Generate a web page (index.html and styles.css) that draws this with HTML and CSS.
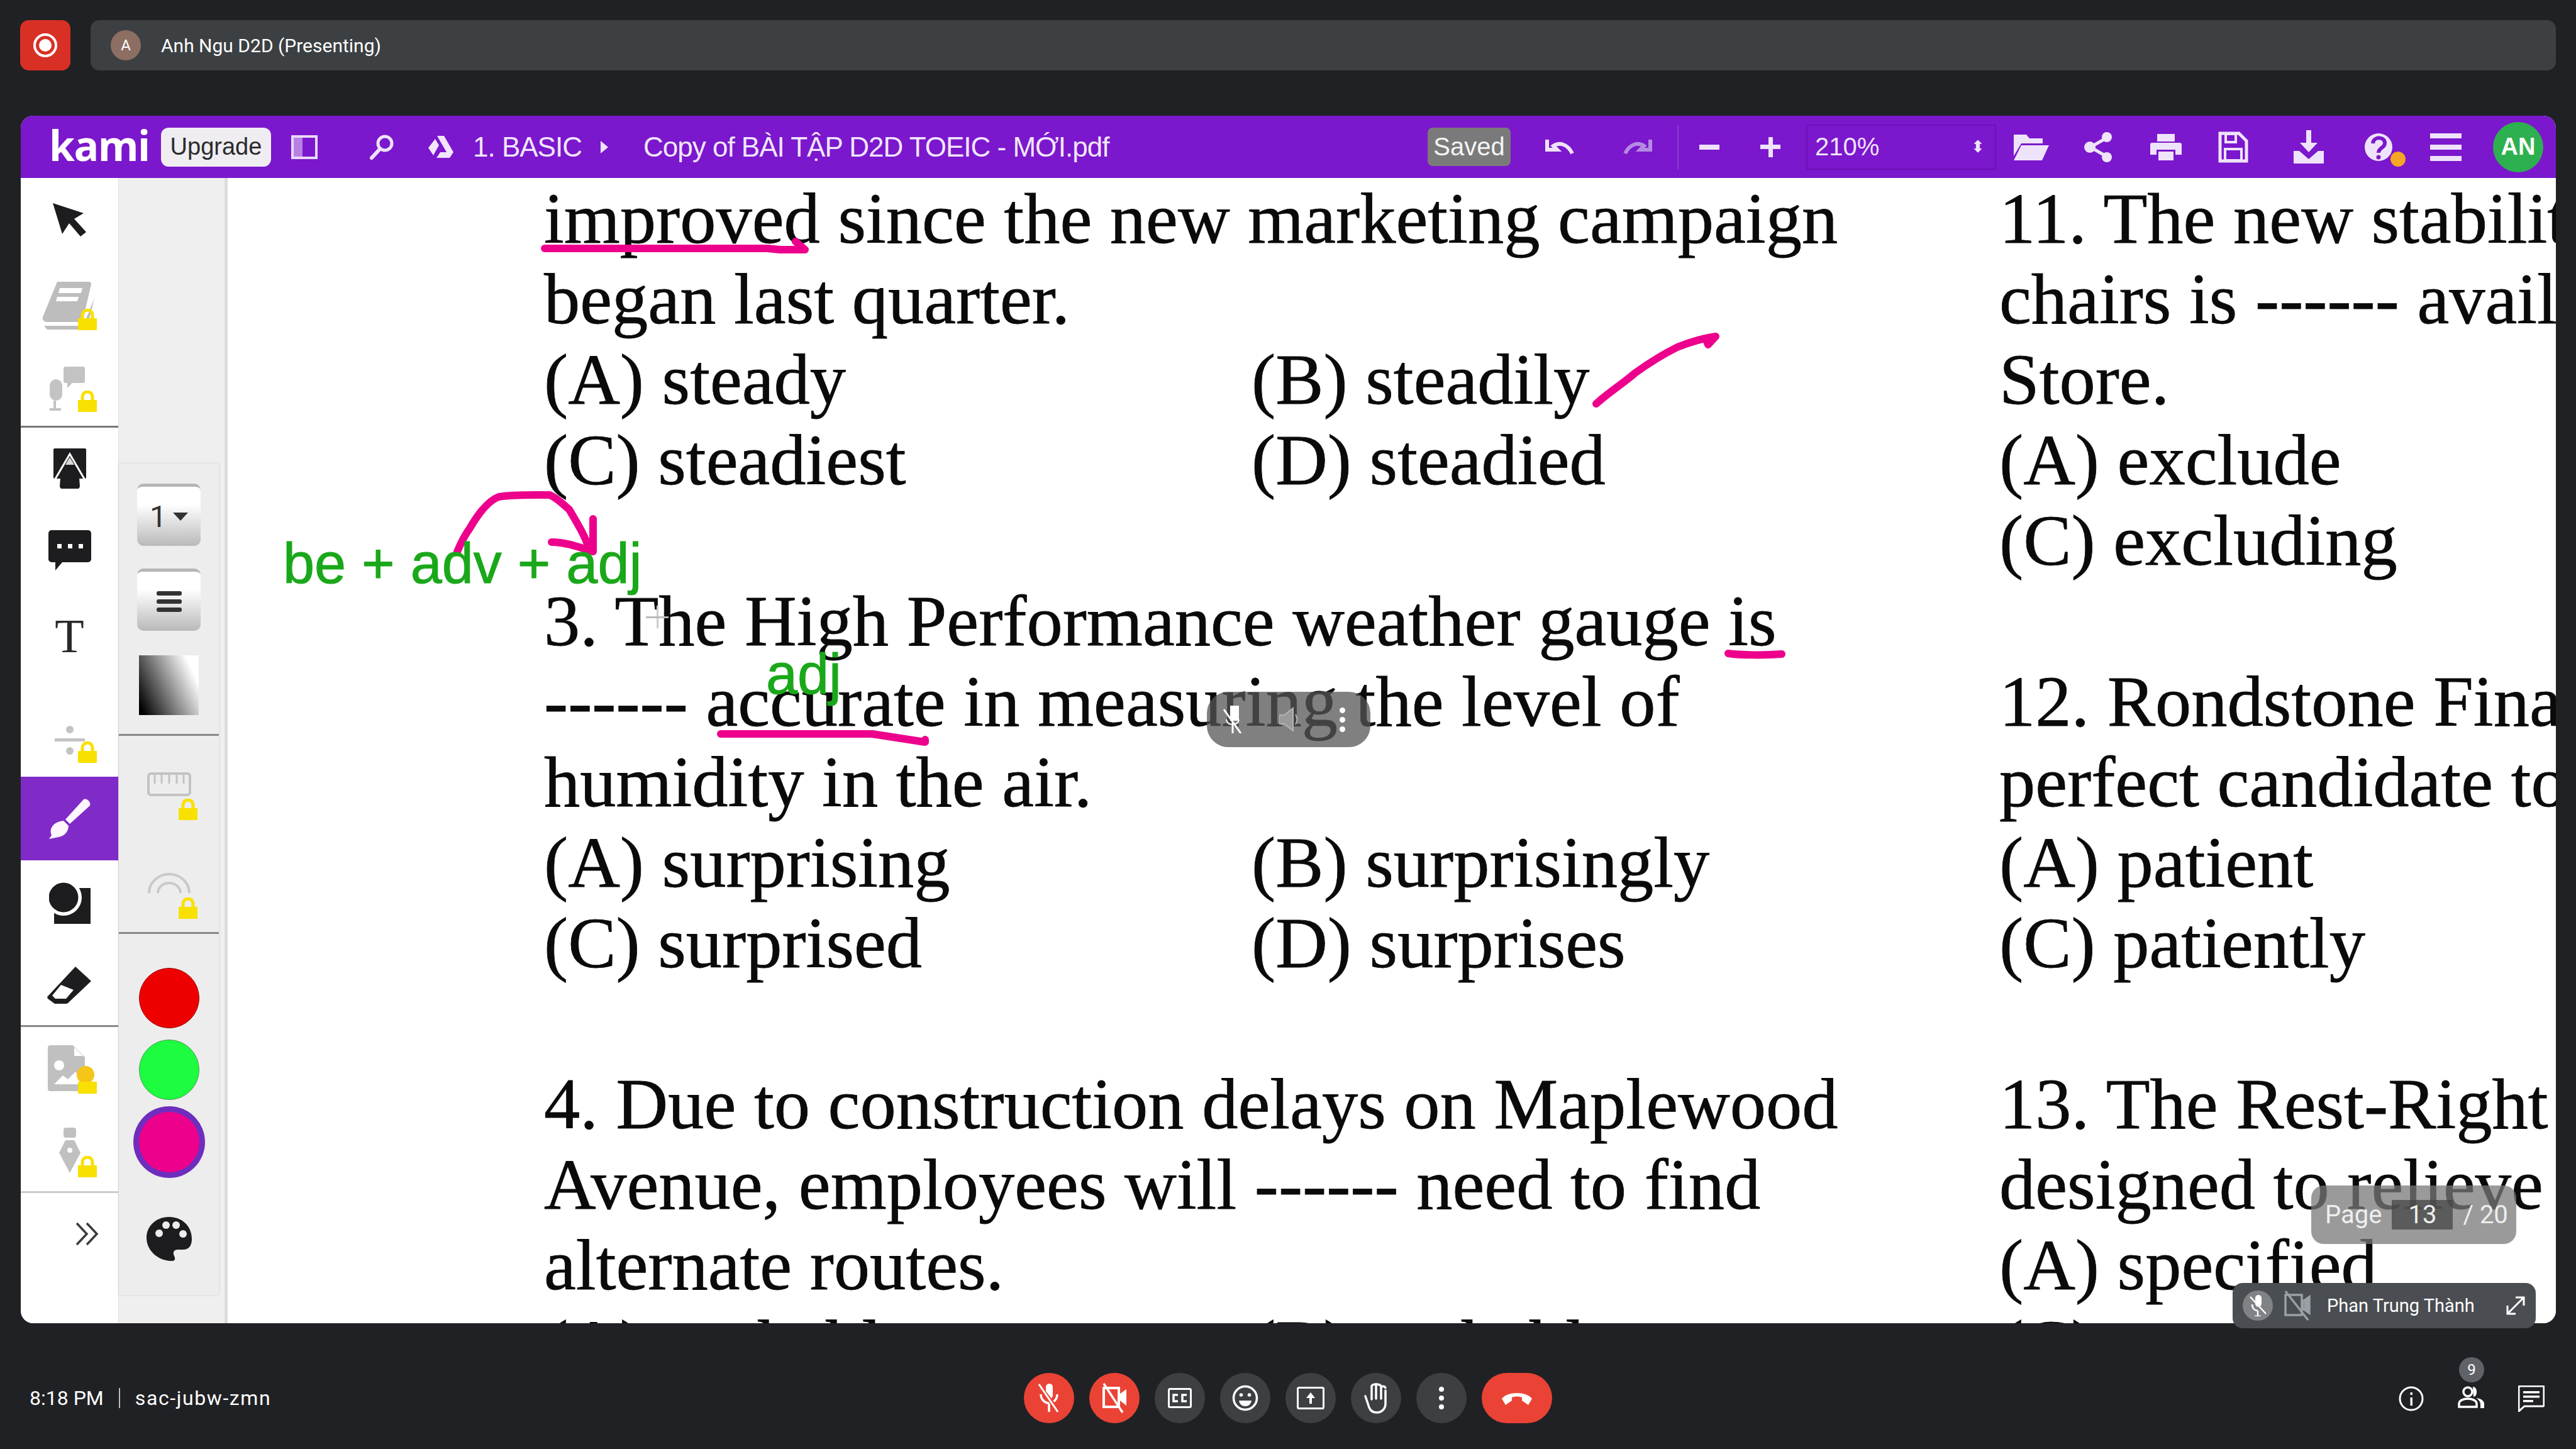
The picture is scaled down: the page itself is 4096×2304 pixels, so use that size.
FILE: index.html
```html
<!DOCTYPE html>
<html lang="en">
<head>
  <meta charset="UTF-8" />
  <title>Meet - Kami</title>
  <link rel="stylesheet" href="styles.css">
</head>
<body>
  <div class="topbar">
    <div class="rec-btn">
      <svg width="44" height="44" viewBox="0 0 44 44"><circle cx="22" cy="22" r="17" fill="none" stroke="#fff" stroke-width="4"/><circle cx="22" cy="22" r="10" fill="#fff"/></svg>
    </div>
    <div class="presenter">
      <div class="avatar-a">A</div>
      <span>Anh Ngu D2D (Presenting)</span>
    </div>
  </div>

  <div class="kami">
    <div class="kami-bar">
      <div class="logo">kami</div>
      <div class="upgrade">Upgrade</div>
      <svg class="ti ti-panel" width="44" height="44" viewBox="0 0 44 44"><rect x="3" y="5" width="38" height="34" fill="none" stroke="#e9d9f8" stroke-width="4"/><rect x="3" y="5" width="16" height="34" fill="#e9d9f8" opacity=".55"/></svg>
      <svg class="ti ti-search" width="44" height="44" viewBox="0 0 44 44"><circle cx="27" cy="16" r="11" fill="none" stroke="#efe3fb" stroke-width="5"/><path d="M19 25 6 39" stroke="#efe3fb" stroke-width="6" stroke-linecap="round"/></svg>
      <svg class="ti ti-drive" width="44" height="44" viewBox="0 0 44 44"><path d="M16 4h11l15 26H31zM13 9l6 10-9 16-8-12zM15 39l6-9h21l-6 9z" fill="#f1e6fc"/></svg>
      <span class="crumb">1. BASIC</span>
      <svg class="ti-caret" width="14" height="24" viewBox="0 0 14 24"><path d="M1 2 13 12 1 22z" fill="#efe3fb"/></svg>
      <span class="crumb crumb-file">Copy of BÀI TẬP D2D TOEIC - MỚI.pdf</span>
      <div class="spacer"></div>
      <div class="saved">Saved</div>
      <div class="tb-icons">
        <svg class="tb-undo" width="52" height="32" viewBox="0 0 52 32"><path d="M3 4v16h16l-6-6c9-6 22-4 30 12" fill="none" stroke="#efe3fb" stroke-width="6"/></svg>
        <svg class="tb-redo" width="52" height="32" viewBox="0 0 52 32"><path d="M49 4v16H33l6-6C30 8 17 10 9 26" fill="none" stroke="#b58be2" stroke-width="6"/></svg>
        <div class="tb-sep"></div>
        <div class="tb-minus"></div>
        <div class="tb-plus"></div>
        <div class="zoom-select"><span>210%</span><i>⬍</i></div>
        <svg class="tb-i" width="60" height="48" viewBox="0 0 60 48"><path d="M2 4h20l5 6h21v8H14L2 38z" fill="#efe3fb"/><path d="M14 21h44L47 45H2z" fill="#efe3fb"/></svg>
        <svg class="tb-i tb-share" width="50" height="50" viewBox="0 0 50 50"><path d="M38 10 12 25l26 15" fill="none" stroke="#efe3fb" stroke-width="5"/><circle cx="38" cy="9" r="8" fill="#efe3fb"/><circle cx="11" cy="25" r="9" fill="#efe3fb"/><circle cx="38" cy="41" r="8" fill="#efe3fb"/></svg>
        <svg class="tb-i tb-print" width="52" height="48" viewBox="0 0 52 48"><path d="M12 3h28v12H12zM4 17h44a3 3 0 0 1 3 3v16H41v-8H11v8H1V20a3 3 0 0 1 3-3zM14 31h24v14H14z" fill="#efe3fb"/></svg>
        <svg class="tb-i tb-save" width="48" height="50" viewBox="0 0 48 50"><path d="M3 3h30l12 12v32H3z" fill="none" stroke="#efe3fb" stroke-width="5"/><path d="M12 4h16v13H12zM11 28h26v18H11z" fill="none" stroke="#efe3fb" stroke-width="4"/></svg>
        <svg class="tb-i tb-dl" width="50" height="56" viewBox="0 0 50 56"><path d="M21 1h8v20h10L25 36 11 21h10zM1 34h9l15 13 15-13h9v20H1z" fill="#efe3fb"/></svg>
        <div class="tb-help">
          <svg width="50" height="50" viewBox="0 0 50 50"><circle cx="25" cy="25" r="22" fill="#efe3fb"/><path d="M16 19c1-12 20-11 19 0 0 7-10 7-10 15" fill="none" stroke="#7b17cc" stroke-width="6"/><circle cx="25" cy="41" r="3.5" fill="#7b17cc"/></svg>
          <b></b>
        </div>
        <div class="tb-menu"><b></b><b></b><b></b></div>
        <div class="avatar-an">AN</div>
      </div>
    </div>

    <div class="kami-body">
      <div class="tool-rail">
        <div class="tool tool-top">
          <svg width="56" height="56" viewBox="0 0 56 56"><path d="M1 1 50 17 35 26 54 47 45 54 27 33 16 50z" fill="#1d1d1f"/></svg>
        </div>
        <div class="tool tool-book">
          <svg width="88" height="84" viewBox="0 0 88 84"><path d="M24 2h50a4 4 0 0 1 4 4l-14 60H8C2 66 0 62 1 58z" fill="#bdbdbe"/><path d="M3 72h62l2-4 16-40-12 50H8z" fill="#bdbdbe"/><path d="M28 12h36l-2 8H26zM24 26h34l-2 7H22z" fill="#fff"/></svg>
          <svg class="lock" viewBox="0 0 30 34"><path d="M7 15V10a8 8 0 0 1 16 0v5" fill="none" stroke="#f8e000" stroke-width="5"/><rect y="15" width="30" height="19" fill="#f8e000"/></svg>
        </div>
        <div class="tool tool-last">
          <svg width="84" height="70" viewBox="0 0 84 70"><rect x="32" y="0" width="34" height="26" rx="3" fill="#c3c3c4"/><path d="M38 26v8l8-8z" fill="#c3c3c4"/><rect x="10" y="20" width="20" height="34" rx="10" fill="#c3c3c4"/><path d="M18 54v12M10 68h18" stroke="#c3c3c4" stroke-width="4"/></svg>
          <svg class="lock" viewBox="0 0 30 34"><path d="M7 15V10a8 8 0 0 1 16 0v5" fill="none" stroke="#f8e000" stroke-width="5"/><rect y="15" width="30" height="19" fill="#f8e000"/></svg>
        </div>
        <div class="tool tool-a">
          <svg width="52" height="64" viewBox="0 0 52 64"><rect width="52" height="48" rx="2" fill="#1d1d1f"/><path d="M11 46h30l1 15-2 3H12l-2-3z" fill="#1d1d1f"/><path d="M2 50 26 9l24 41" fill="none" stroke="#fff" stroke-width="3"/><path d="M26 14l7 12H19z" fill="#d8d8d8"/></svg>
        </div>
        <div class="tool tool-comment">
          <svg width="68" height="66" viewBox="0 0 68 66"><path d="M5 0h58a5 5 0 0 1 5 5v41a5 5 0 0 1-5 5H22L11 64V51H5a5 5 0 0 1-5-5V5a5 5 0 0 1 5-5z" fill="#1d1d1f"/><rect x="14" y="22" width="7" height="7" fill="#fff"/><rect x="31" y="22" width="7" height="7" fill="#fff"/><rect x="48" y="22" width="7" height="7" fill="#fff"/></svg>
        </div>
        <div class="tool tool-t">T</div>
        <div class="tool tool-div">
          <svg width="48" height="46" viewBox="0 0 48 46"><circle cx="24" cy="6" r="6" fill="#c3c3c4"/><rect y="20" width="48" height="5" fill="#c3c3c4"/><circle cx="24" cy="40" r="6" fill="#c3c3c4"/></svg>
          <svg class="lock" viewBox="0 0 30 34"><path d="M7 15V10a8 8 0 0 1 16 0v5" fill="none" stroke="#f8e000" stroke-width="5"/><rect y="15" width="30" height="19" fill="#f8e000"/></svg>
        </div>
        <div class="tool tool-active">
          <svg width="68" height="64" viewBox="0 0 68 64"><path d="M56 1c5-2 12 4 10 10L34 40 27 33zM24 35l8 8c0 10-8 17-16 18L1 64l4-6c-2-4-2-8 0-12 4-8 12-10 19-11z" fill="#fdf6ff"/></svg>
        </div>
        <div class="tool tool-shape">
          <svg width="66" height="68" viewBox="0 0 66 68"><rect x="8" y="10" width="58" height="57" fill="#1d1d1f"/><circle cx="23" cy="25" r="29" fill="#fff"/><circle cx="23" cy="25" r="23.500" fill="#1d1d1f"/></svg>
        </div>
        <div class="tool tool-eraser">
          <svg width="72" height="62" viewBox="0 0 72 62"><path d="M45 1 70 24 34 58q-1 2-4 2H12L1 52q-2-3 1-5z" fill="#1d1d1f"/><path d="M22 30 42 38 30 52H13L8 47z" fill="#fff"/></svg>
        </div>
        <div class="tool tool-image">
          <svg width="60" height="74" viewBox="0 0 60 74"><path d="M0 4a4 4 0 0 1 4-4h36l19 19v54H4a4 4 0 0 1-4-4z" fill="#c0c0c1"/><path d="M42 3v14h14z" fill="#fff"/><circle cx="18" cy="32" r="8" fill="#fff"/><path d="M10 62 24 48l8 6 12-12 14 20z" fill="#fff"/></svg>
          <svg class="lock lock-gold" viewBox="0 0 30 34"><circle cx="12" cy="4" r="14" fill="#f5c518"/><rect y="15" width="30" height="19" fill="#f8e000"/></svg>
        </div>
        <div class="tool tool-pen">
          <svg width="34" height="72" viewBox="0 0 34 72"><rect x="7" y="0" width="20" height="16" rx="4" fill="#c0c0c1"/><path d="M10 20h14l10 20-17 32L0 40z" fill="#c0c0c1"/><circle cx="17" cy="36" r="4" fill="#fff"/></svg>
          <svg class="lock" viewBox="0 0 30 34"><path d="M7 15V10a8 8 0 0 1 16 0v5" fill="none" stroke="#f8e000" stroke-width="5"/><rect y="15" width="30" height="19" fill="#f8e000"/></svg>
        </div>
        <div class="tool tool-more">
          <svg width="36" height="38" viewBox="0 0 36 38"><path d="M2 2 18 19 2 36M18 2 34 19 18 36" fill="none" stroke="#3a3a3a" stroke-width="3.5"/></svg>
        </div>
      </div>

      <div class="sub-strip">
        <div class="sub-panel">
          <div class="sub-group">
            <div class="size-btn"><span>1</span><i></i></div>
            <div class="size-btn size-lines"><b></b><b></b><b></b></div>
            <div class="gradient"></div>
          </div>
          <div class="sub-tool sub-ruler">
            <svg width="70" height="38" viewBox="0 0 70 38"><rect x="2" y="2" width="66" height="34" rx="4" fill="none" stroke="#c3c3c4" stroke-width="4"/><path d="M12 2v16M23 2v16M35 2v16M47 2v16M58 2v16" stroke="#c3c3c4" stroke-width="3"/></svg>
            <svg class="lock" viewBox="0 0 30 34"><path d="M7 15V10a8 8 0 0 1 16 0v5" fill="none" stroke="#f8e000" stroke-width="5"/><rect y="15" width="30" height="19" fill="#f8e000"/></svg>
          </div>
          <div class="sub-tool sub-arc">
            <svg width="70" height="34" viewBox="0 0 70 34"><path d="M3 34a32 30 0 0 1 64 0M17 34a18 16 0 0 1 36 0" fill="none" stroke="#c9c9ca" stroke-width="4"/></svg>
            <svg class="lock" viewBox="0 0 30 34"><path d="M7 15V10a8 8 0 0 1 16 0v5" fill="none" stroke="#f8e000" stroke-width="5"/><rect y="15" width="30" height="19" fill="#f8e000"/></svg>
          </div>
          <div class="swatches">
            <div class="swatch swatch-red"></div>
            <div class="swatch swatch-green"></div>
            <div class="swatch swatch-pink"></div>
          </div>
          <svg class="palette" width="72" height="72" viewBox="0 0 72 72"><path d="M36 1C16 1 0 15 0 34c0 20 18 37 40 37 6 0 6-4 4-8-3-6 0-10 6-10h8c9 0 14-6 14-17C72 15 56 1 36 1z" fill="#1d1d1f"/><circle cx="20" cy="27" r="6" fill="#ededed"/><circle cx="31" cy="14" r="6" fill="#ededed"/><circle cx="47" cy="14" r="6" fill="#ededed"/><circle cx="58" cy="28" r="6" fill="#ededed"/></svg>
        </div>
      </div>

      <div class="page">
        <div class="col col-left">
          <div class="line">improved since the new marketing campaign</div>
          <div class="line">began last quarter.</div>
          <div class="line opts"><span>(A) steady</span><span>(B) steadily</span></div>
          <div class="line opts"><span>(C) steadiest</span><span>(D) steadied</span></div>
          <div class="line"></div>
          <div class="line">3. The High Performance weather gauge is</div>
          <div class="line">------ accurate in measuring the level of</div>
          <div class="line">humidity in the air.</div>
          <div class="line opts"><span>(A) surprising</span><span>(B) surprisingly</span></div>
          <div class="line opts"><span>(C) surprised</span><span>(D) surprises</span></div>
          <div class="line"></div>
          <div class="line">4. Due to construction delays on Maplewood</div>
          <div class="line">Avenue, employees will ------ need to find</div>
          <div class="line">alternate routes.</div>
          <div class="line opts"><span>(A) probable</span><span>(B) probably</span></div>
        </div>
        <div class="col col-right">
          <div class="line">11. The new stability</div>
          <div class="line">chairs is ------ available</div>
          <div class="line">Store.</div>
          <div class="line">(A) exclude</div>
          <div class="line">(C) excluding</div>
          <div class="line"></div>
          <div class="line">12. Rondstone Financial</div>
          <div class="line">perfect candidate to</div>
          <div class="line">(A) patient</div>
          <div class="line">(C) patiently</div>
          <div class="line"></div>
          <div class="line">13. The Rest-Right</div>
          <div class="line">designed to relieve</div>
          <div class="line">(A) specified</div>
          <div class="line">(C) specific</div>
        </div>

        <svg class="ink" width="3706" height="1821" viewBox="0 283 3706 1821">
          <g fill="none" stroke="#ec008c" stroke-width="12" stroke-linecap="round" stroke-linejoin="round">
            <path d="M866 395H1220l20 2H1280L1265 384"/>
            <path d="M2538 642c20-18 45-34 62-49 25-18 45-30 67-41 20-8 40-14 61-17M2712 538l4 10 12-13"/>
            <path d="M727 877c6-14 12-26 20-37 14-24 30-44 46-50 20-4 55-3 81-3 14 6 22 16 31 23 14 24 24 40 31 60"/>
            <path d="M877 862c22 0 44 8 66 15V825"/>
            <path d="M2748 1039c18 3 60 3 85 1"/>
            <path d="M1146 1167h241l84 13v-4"/>
          </g>
        </svg>
        <div class="note note-main">be + adv + adj</div>
        <div class="note note-small">adj</div>
        <div class="cursor-plus"></div>

        <div class="mute-pill">
          <svg width="30" height="44" viewBox="0 0 30 44"><rect x="11" y="0" width="14" height="24" fill="#fff"/><path d="M1 6 28 44M15 26v18" stroke="#fff" stroke-width="3"/><path d="M5 22c1 6 5 8 10 8s9-2 10-8" fill="none" stroke="#fff" stroke-width="2"/></svg>
          <svg width="30" height="44" viewBox="0 0 30 44"><path d="M0 15h8L22 4v36L8 29H0z" fill="#9a9a9a" stroke="#b4b4b4" stroke-width="2"/><path d="M26 14c3 5 3 11 0 16" fill="none" stroke="#b4b4b4" stroke-width="2"/></svg>
          <div class="dots"><b></b><b></b><b></b></div>
        </div>

        <div class="page-pill">
          <span>Page</span>
          <div class="page-num">13</div>
          <span>/ 20</span>
        </div>
      </div>
    </div>
  </div>

  <div class="tile-chip">
    <div class="chip-mic">
      <svg width="30" height="34" viewBox="0 0 30 34"><rect x="11" y="0" width="10" height="19" rx="5" fill="#fff"/><path d="M3 3 28 30M15 25v9M10 34h10M6 15c0 6 4 10 9 10" fill="none" stroke="#fff" stroke-width="2.5"/></svg>
    </div>
    <svg class="chip-cam" width="42" height="50" viewBox="0 0 42 50"><path d="M2 8h26v32H2zM30 18l10-7v26l-10-7z" fill="none" stroke="#9aa0a6" stroke-width="3.5"/><path d="M32 16v16l8 6V11z" fill="#9aa0a6"/><path d="M2 2l36 46" stroke="#9aa0a6" stroke-width="3.5"/></svg>
    <span class="chip-name">Phan Trung Thành</span>
    <svg class="chip-exp" width="32" height="32" viewBox="0 0 32 32"><path d="M3 29 29 3M16 3h13v13M3 16v13h13" fill="none" stroke="#fff" stroke-width="3"/></svg>
  </div>

  <div class="bottombar">
    <div class="meeting"><span>8:18 PM</span><i></i><span class="meet-code">sac-jubw-zmn</span></div>
    <div class="controls">
      <div class="ctl ctl-red">
        <svg width="36" height="48" viewBox="0 0 36 48"><rect x="13" y="1" width="11" height="24" rx="5.5" fill="#fff"/><path d="M5 18c0 8 6 14 13 14s13-6 13-14M18 32v14" fill="none" stroke="#fff" stroke-width="3.5"/><path d="M1 3 33 45" stroke="#ea4335" stroke-width="7"/><path d="M2 2 32 46" stroke="#fff" stroke-width="3"/></svg>
      </div>
      <div class="ctl ctl-red">
        <svg width="40" height="48" viewBox="0 0 40 48"><path d="M3 8h24v30H3z" fill="none" stroke="#fff" stroke-width="4"/><path d="M29 17 39 10v26l-10-8z" fill="#fff"/><path d="M3 1l30 46" stroke="#fff" stroke-width="3.5"/></svg>
      </div>
      <div class="ctl">
        <svg width="38" height="32" viewBox="0 0 38 32"><rect x="1.5" y="1.5" width="35" height="29" rx="2" fill="none" stroke="#fff" stroke-width="3"/><path d="M16 11H9v10h7M30 11h-7v10h7" fill="none" stroke="#fff" stroke-width="3.5"/></svg>
      </div>
      <div class="ctl">
        <svg width="42" height="42" viewBox="0 0 42 42"><circle cx="21" cy="21" r="18.5" fill="none" stroke="#fff" stroke-width="3.5"/><circle cx="14.5" cy="16" r="2.8" fill="#fff"/><circle cx="27.5" cy="16" r="2.8" fill="#fff"/><path d="M11 25h20c-1 6-5 9-10 9s-9-3-10-9z" fill="#fff"/></svg>
      </div>
      <div class="ctl">
        <svg width="44" height="36" viewBox="0 0 44 36"><rect x="1.5" y="1.5" width="41" height="33" rx="2" fill="none" stroke="#fff" stroke-width="3"/><path d="M22 9l7 9h-5v9h-4v-9h-5z" fill="#fff"/></svg>
      </div>
      <div class="ctl">
        <svg width="38" height="50" viewBox="0 0 38 50"><path d="M2 22l6 18c2 5 6 8 12 8 8 0 14-6 14-14V13M12 27V7M19 26V3M27 26V6" fill="none" stroke="#fff" stroke-width="3.5" stroke-linecap="round"/><path d="M12 7c0-4 7-4 7-4s8 0 8 4M27 8c2-3 7-2 7 2" fill="none" stroke="#fff" stroke-width="3.5"/></svg>
      </div>
      <div class="ctl ctl-dots"><b></b><b></b><b></b></div>
      <div class="ctl ctl-red ctl-hang">
        <svg width="50" height="24" viewBox="0 0 50 24"><path d="M1 13C10 1 40 1 49 13l-6 10-10-7v-5c-5-2-11-2-16 0v5L7 23z" fill="#fff"/></svg>
      </div>
    </div>
    <div class="side-icons">
      <svg width="44" height="44" viewBox="0 0 44 44"><circle cx="22" cy="22" r="18" fill="none" stroke="#fff" stroke-width="3"/><rect x="20.5" y="20" width="3.5" height="13" fill="#fff"/><rect x="20.5" y="12" width="3.5" height="4" fill="#fff"/></svg>
      <div class="people">
        <div class="people-badge">9</div>
        <svg width="44" height="36" viewBox="0 0 44 36"><circle cx="16" cy="9" r="7" fill="none" stroke="#fff" stroke-width="3.5"/><path d="M2 33v-5c0-5 7-8 14-8s14 3 14 8v5z" fill="none" stroke="#fff" stroke-width="3.5"/><path d="M24 1c8 0 8 16 1 16M30 19c8 1 12 5 12 9v7h-6v-7c0-3-3-6-6-9z" fill="#fff"/></svg>
      </div>
      <svg width="42" height="42" viewBox="0 0 42 42"><path d="M1 3a2 2 0 0 1 2-2h36a2 2 0 0 1 2 2v28a2 2 0 0 1-2 2H10L1 41z" fill="none" stroke="#fff" stroke-width="3"/><path d="M8 9h26v3.500H8zM8 16h26v3.500H8zM8 23h16v3.500H8z" fill="#fff"/></svg>
    </div>
  </div>
</body>
</html>
```

FILE: styles.css
```css
* {
  box-sizing: border-box;
}

html, body {
  margin: 0;
  height: 100%;
}

body {
  width: 4096px;
  height: 2304px;
  background: #202124;
  font-family: Roboto, "Open Sans", sans-serif;
  color: #fff;
  overflow: hidden;
  position: relative;
  display: flex;
  flex-direction: column;
}

/* top strip */
.topbar {
  display: flex;
  gap: 32px;
  padding: 32px 32px 0;
  height: 184px;
}

.rec-btn {
  width: 80px;
  height: 80px;
  background: #d93025;
  border-radius: 14px;
  display: flex;
  align-items: center;
  justify-content: center;
}

.presenter {
  flex: 1;
  height: 80px;
  background: #3c4043;
  border-radius: 14px;
  display: flex;
  align-items: center;
  padding-left: 32px;
  gap: 32px;
  font-size: 30px;
}

.avatar-a {
  width: 48px;
  height: 48px;
  border-radius: 50%;
  background: #8d6e63;
  display: flex;
  align-items: center;
  justify-content: center;
  font-size: 24px;
}

/* kami window */
.kami {
  margin: 0 32px 0 33px;
  height: 1920px;
  border-radius: 20px;
  overflow: hidden;
  background: #fff;
  display: flex;
  flex-direction: column;
}

.kami-bar {
  height: 99px;
  background: #7b17cc;
  display: flex;
  align-items: center;
  padding-left: 45px;
  flex-shrink: 0;
}

.logo {
  font-family: "Open Sans", sans-serif;
  font-weight: 700;
  font-size: 66px;
  letter-spacing: -1.5px;
  line-height: 70px;
  width: 178px;
  margin-top: -8px;
}

.upgrade {
  width: 175px;
  height: 62px;
  background: #efedf2;
  color: #2b2b2b;
  border-radius: 12px;
  font-family: "Liberation Sans", sans-serif;
  font-size: 38px;
  line-height: 60px;
  text-align: center;
  flex-shrink: 0;
}

.ti-panel { margin-left: 31px; }
.ti-search { margin-left: 79px; }
.ti-drive { margin-left: 50px; }

.crumb {
  font-family: "Liberation Sans", sans-serif;
  font-size: 44px;
  letter-spacing: -1px;
  color: #f1e6fc;
  white-space: nowrap;
  margin-left: 29px;
}

.ti-caret { margin-left: 29px; }

.crumb-file {
  margin-left: 55px;
}

.spacer {
  flex: 1;
}

.saved {
  width: 132px;
  height: 61px;
  background: #7a7a7a;
  border-radius: 8px;
  font-family: "Liberation Sans", sans-serif;
  font-size: 40px;
  line-height: 61px;
  text-align: center;
  color: #f4f4f4;
}

.tb-icons {
  display: flex;
  align-items: center;
  padding-right: 20px;
  height: 99px;
}

.tb-undo { margin-left: 55px; }
.tb-redo { margin-left: 66px; }

.tb-sep {
  width: 2px;
  height: 70px;
  background: #8a3fd0;
  margin-left: 40px;
}

.tb-minus {
  width: 32px;
  height: 8px;
  background: #efe3fb;
  margin-left: 33px;
}

.tb-plus {
  width: 32px;
  height: 32px;
  margin-left: 65px;
  background:
    linear-gradient(#efe3fb, #efe3fb) center / 32px 7px no-repeat,
    linear-gradient(#efe3fb, #efe3fb) center / 7px 32px no-repeat;
}

.zoom-select {
  width: 302px;
  height: 72px;
  margin-left: 41px;
  border: 2px solid #6c10b6;
  display: flex;
  align-items: center;
  justify-content: space-between;
  padding: 0 16px 0 12px;
  font-family: "Liberation Sans", sans-serif;
  font-size: 40px;
  color: #efe3fb;
}

.zoom-select i {
  font-style: normal;
  font-size: 26px;
}

.tb-i { margin-left: 26px; flex-shrink: 0; }
.tb-share { margin-left: 52px; }
.tb-print { margin-left: 56px; }
.tb-save { margin-left: 57px; }
.tb-dl { margin-left: 71px; }

.tb-help {
  position: relative;
  width: 50px;
  height: 50px;
  margin-left: 61px;
}

.tb-help b {
  position: absolute;
  right: -18px;
  bottom: -6px;
  width: 24px;
  height: 24px;
  border-radius: 50%;
  background: #f5a623;
}

.tb-menu {
  width: 50px;
  margin-left: 57px;
  display: flex;
  flex-direction: column;
  gap: 10px;
}

.tb-menu b {
  height: 8px;
  background: #efe3fb;
}

.avatar-an {
  width: 80px;
  height: 80px;
  margin-left: 50px;
  border-radius: 50%;
  background: #2db04f;
  display: flex;
  align-items: center;
  justify-content: center;
  font-family: "Liberation Sans", sans-serif;
  font-weight: 700;
  font-size: 38px;
}

.kami-body {
  flex: 1;
  display: flex;
  min-height: 0;
}

/* left tool rail */
.tool-rail {
  width: 155px;
  background: #fff;
  flex-shrink: 0;
  display: flex;
  flex-direction: column;
}

.tool {
  position: relative;
  display: flex;
  align-items: center;
  justify-content: center;
  flex-shrink: 0;
}

.lock {
  position: absolute;
  width: 30px;
  height: 34px;
  left: 91px;
}

.tool-top { height: 134px; }

.tool-book { height: 142px; }
.tool-book .lock { top: 74px; }

.tool-last { height: 121px; border-bottom: 3px solid #777; }
.tool-last .lock { top: 62px; }

.tool-a { height: 130px; }
.tool-comment { height: 132px; }

.tool-t {
  height: 138px;
  font-family: "Liberation Serif", serif;
  font-size: 76px;
  color: #2a2a2a;
}

.tool-div { height: 155px; padding-top: 38px; }
.tool-div .lock { top: 99px; }

.tool-active {
  height: 133px;
  background: #802bc8;
}

.tool-shape { height: 136px; padding-left: 0; }
.tool-eraser { height: 129px; border-bottom: 3px solid #888; }

.tool-image { height: 131px; }
.tool-image svg:first-child { margin-right: 10px; }
.tool-image .lock { top: 72px; }
.lock-gold { overflow: visible; }

.tool-pen { height: 133px; border-bottom: 3px solid #ccc; }
.tool-pen .lock { top: 74px; }

.tool-more {
  height: 130px;
  padding-left: 54px;
}

/* brush options */
.sub-strip {
  width: 174px;
  flex-shrink: 0;
  background: #efefef;
  border-left: 1px solid #ddd;
  border-right: 5px solid #dcdcdc;
  padding-top: 454px;
}

.sub-panel {
  width: 159px;
  height: 1322px;
  background: #ededed;
  display: flex;
  flex-direction: column;
  align-items: center;
  box-shadow: 0 0 4px rgba(0, 0, 0, .12);
}

.sub-group {
  width: 100%;
  height: 433px;
  padding-top: 32px;
  display: flex;
  flex-direction: column;
  align-items: center;
  border-bottom: 3px solid #888;
}

.size-btn {
  width: 101px;
  height: 99px;
  border-radius: 10px;
  border-top: 5px solid #b5b5b5;
  background: linear-gradient(#fff 30%, #b9b9b9);
  display: flex;
  align-items: center;
  justify-content: center;
  gap: 10px;
  color: #333;
  font-size: 48px;
}

.size-btn i {
  border: 12px solid transparent;
  border-top: 13px solid #333;
  border-bottom: 0;
}

.size-lines {
  margin-top: 36px;
  flex-direction: column;
  gap: 6px;
}

.size-lines b {
  width: 40px;
  height: 7px;
  border-radius: 3px;
  background: #333;
}

.gradient {
  width: 95px;
  height: 95px;
  margin-top: 39px;
  background: linear-gradient(65deg, #000 5%, #fff 85%);
}

.sub-tool {
  position: relative;
  width: 100%;
  height: 158px;
  display: flex;
  justify-content: center;
  padding-top: 58px;
}

.sub-tool .lock {
  left: 95px;
  top: 100px;
}

.sub-arc {
  height: 157px;
  padding-top: 58px;
  border-bottom: 3px solid #888;
}

.sub-arc .lock {
  top: 99px;
}

.swatches {
  display: flex;
  flex-direction: column;
  align-items: center;
  gap: 18px;
  padding-top: 54px;
}

.swatch {
  width: 96px;
  height: 96px;
  border-radius: 50%;
}

.swatch-red {
  background: #ee0000;
  border: 1px solid #900;
}

.swatch-green {
  background: #1dfc3f;
  border: 1px solid #4a9a55;
}

.swatch-pink {
  background: #ec008c;
  box-shadow: 0 0 0 9px #6f2dbd;
  margin-top: 1px;
}

.palette {
  margin-top: 70px;
}

/* the pdf page */
.page {
  flex: 1;
  position: relative;
  overflow: hidden;
  background: #fff;
  display: flex;
  font-family: "Liberation Serif", serif;
  font-size: 114.5px;
  -webkit-text-stroke: .8px #0a0a0a;
  color: #0a0a0a;
}

.col {
  flex-shrink: 0;
  margin-top: 1px;
}

.col-left {
  width: 2314px;
  margin-left: 503px;
}

.line {
  height: 128px;
  line-height: 128px;
  white-space: nowrap;
}

.opts {
  display: flex;
}

.opts span:first-child {
  width: 1125px;
}

.ink {
  position: absolute;
  left: -362px;
  top: 0;
  pointer-events: none;
}

.note {
  position: absolute;
  font-family: "Liberation Sans", sans-serif;
  font-size: 90px;
  line-height: 100px;
  color: #1aa81a;
  -webkit-text-stroke: 1px #1aa81a;
  white-space: nowrap;
}

.note-main {
  left: 88px;
  top: 563px;
}

.note-small {
  left: 856px;
  top: 739px;
}

.cursor-plus {
  position: absolute;
  left: 665px;
  top: 680px;
  width: 36px;
  height: 36px;
  background:
    linear-gradient(#bbb, #bbb) center / 36px 3px no-repeat,
    linear-gradient(#ccc, #ccc) center / 3px 36px no-repeat;
}

.mute-pill {
  position: absolute;
  left: 1557px;
  top: 817px;
  width: 260px;
  height: 88px;
  border-radius: 34px;
  background: rgba(85, 85, 85, .75);
  display: flex;
  align-items: center;
  padding-left: 26px;
  gap: 59px;
  -webkit-text-stroke: 0;
}

.dots {
  display: flex;
  flex-direction: column;
  gap: 6px;
  margin-left: 7px;
}

.dots b {
  width: 9px;
  height: 9px;
  border-radius: 50%;
  background: #fff;
}

.page-pill {
  position: absolute;
  left: 3313px;
  top: 1602px;
  width: 326px;
  height: 93px;
  border-radius: 20px;
  background: rgba(120, 120, 120, .75);
  display: flex;
  align-items: center;
  padding-left: 22px;
  gap: 16px;
  font-family: Roboto, sans-serif;
  font-size: 40px;
  color: #eee;
  -webkit-text-stroke: 0;
  white-space: nowrap;
}

.page-num {
  width: 97px;
  height: 47px;
  line-height: 47px;
  text-align: center;
  background: rgba(70, 70, 70, .75);
}

/* participant chip over window corner */
.tile-chip {
  position: absolute;
  left: 3550px;
  top: 2040px;
  width: 482px;
  height: 72px;
  border-radius: 16px;
  background: #4a4d51;
  display: flex;
  align-items: center;
  padding: 0 16px;
}

.chip-mic {
  width: 48px;
  height: 48px;
  border-radius: 50%;
  background: #7f8386;
  display: flex;
  align-items: center;
  justify-content: center;
}

.chip-cam {
  margin-left: 18px;
}

.chip-name {
  margin-left: 26px;
  font-size: 29px;
  flex: 1;
  white-space: nowrap;
}

/* bottom bar */
.bottombar {
  flex: 1;
  position: relative;
  display: flex;
  align-items: center;
  justify-content: center;
  padding-top: 38px;
  height: 200px;
}

.meeting {
  position: absolute;
  left: 47px;
  top: 100px;
  display: flex;
  align-items: center;
  font-size: 32px;
  line-height: 38px;
  gap: 24px;
}

.meeting i {
  width: 2px;
  height: 32px;
  background: #bbb;
}

.meet-code {
  letter-spacing: 1.6px;
}

.controls {
  display: flex;
  gap: 24px;
}

.ctl {
  width: 80px;
  height: 80px;
  border-radius: 50%;
  background: #3c4043;
  display: flex;
  align-items: center;
  justify-content: center;
}

.ctl-red {
  background: #ea4335;
}

.ctl-hang {
  width: 112px;
  border-radius: 40px;
}

.ctl-dots {
  flex-direction: column;
  gap: 6px;
}

.ctl-dots b {
  width: 8px;
  height: 8px;
  border-radius: 50%;
  background: #fff;
}

.side-icons {
  position: absolute;
  right: 50px;
  top: 98px;
  display: flex;
  align-items: center;
  gap: 52px;
}

.people {
  position: relative;
}

.people-badge {
  position: absolute;
  left: 2px;
  top: -46px;
  width: 40px;
  height: 40px;
  border-radius: 50%;
  background: #5f6368;
  font-size: 24px;
  line-height: 40px;
  text-align: center;
}
```
